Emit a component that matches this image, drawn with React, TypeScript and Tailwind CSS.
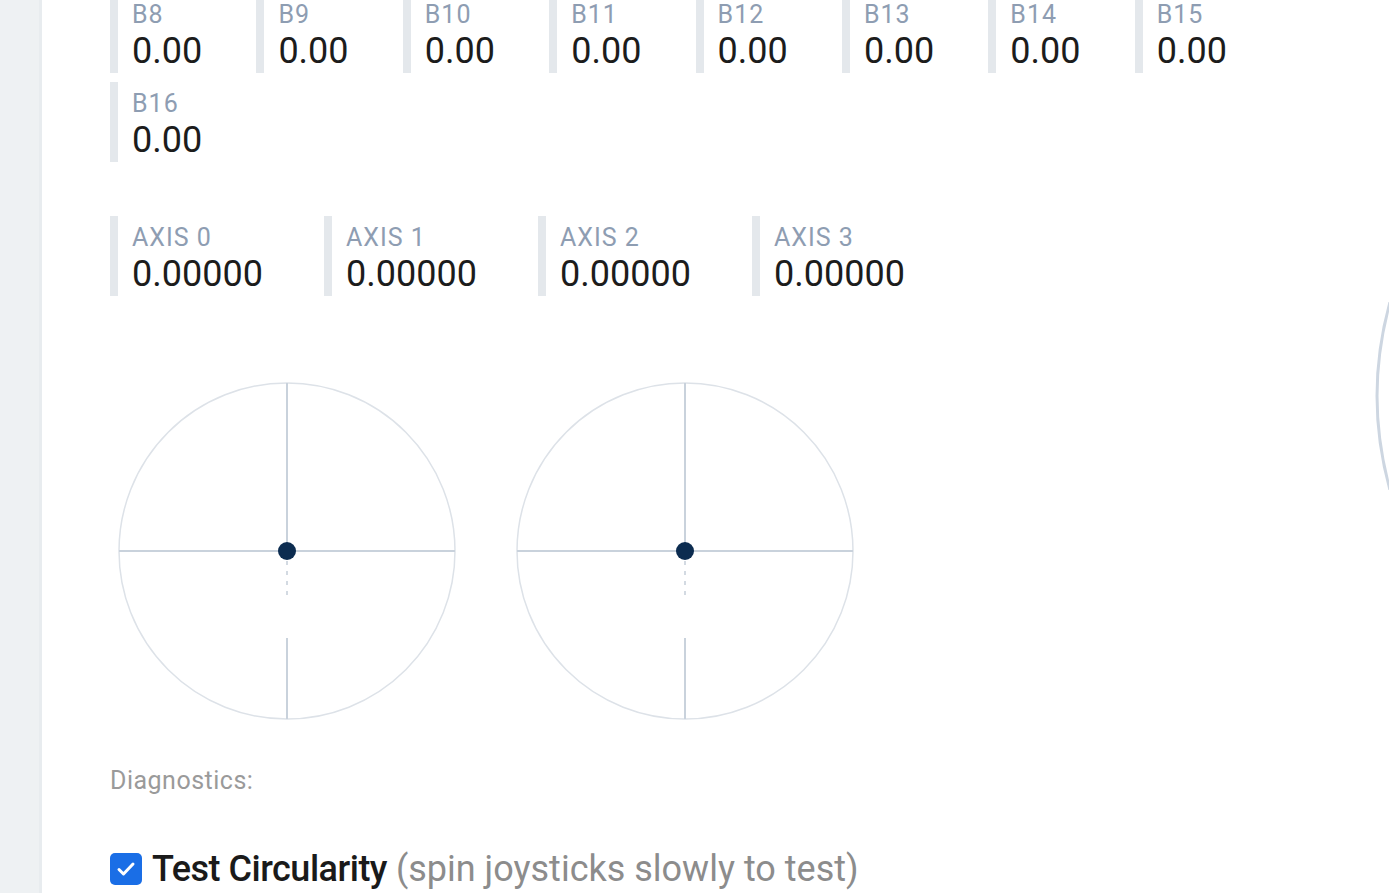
import React from 'react';

const buttons = ['B8', 'B9', 'B10', 'B11', 'B12', 'B13', 'B14', 'B15', 'B16'];
const axes = ['AXIS 0', 'AXIS 1', 'AXIS 2', 'AXIS 3'];

const Cell: React.FC<{ label: string; value: string }> = ({ label, value }) => (
  <div className="h-[80px] border-l-[8px] border-[#e4e8ec] pl-[14px] pt-[6px]">
    <div className="text-[25px] leading-[31px] tracking-[1px] text-[#8e9db2]">{label}</div>
    <div className="text-[36px] leading-[42px] text-[#1c1c1c]">{value}</div>
  </div>
);

const Stick: React.FC = () => (
  <svg width="340" height="340" viewBox="0 0 340 340" className="shrink-0">
    <circle cx="170" cy="170" r="168" fill="none" stroke="#dde2e8" strokeWidth="1.5" />
    <line x1="2" y1="170" x2="338" y2="170" stroke="#c9d2dc" strokeWidth="2" />
    <line x1="170" y1="2" x2="170" y2="170" stroke="#c9d2dc" strokeWidth="2" />
    <line x1="170" y1="180" x2="170" y2="218" stroke="#d3dae2" strokeWidth="2" strokeDasharray="4 6" />
    <line x1="170" y1="257" x2="170" y2="338" stroke="#c9d2dc" strokeWidth="2" />
    <circle cx="170" cy="170" r="9" fill="#0c2c50" />
  </svg>
);

export default function App() {
  return (
    <div className="flex h-[893px] w-[1389px] overflow-hidden bg-white font-['Roboto',sans-serif]">
      <aside className="w-[42px] shrink-0 border-r-[3px] border-[#e8ecef] bg-[#eef1f3]" />
      <main className="flex-1 pl-[68px]">
        <div className="-mt-[7px] grid grid-cols-[repeat(8,146.4px)] gap-y-[9px]">
          {buttons.map((b) => (
            <Cell key={b} label={b} value="0.00" />
          ))}
        </div>
        <div className="mt-[54px] grid grid-cols-[repeat(4,214px)]">
          {axes.map((a) => (
            <Cell key={a} label={a} value="0.00000" />
          ))}
        </div>
        <div className="ml-[7px] mt-[85px] flex gap-[58px]">
          <Stick />
          <Stick />
        </div>
        <div className="mt-[46px] text-[25px] leading-[28px] tracking-[0.5px] text-[#9a9a9a]">Diagnostics:</div>
        <label className="mt-[54px] flex h-[40px] items-center gap-[10px] text-[36px] leading-[40px]">
          <span className="flex h-[32px] w-[32px] items-center justify-center rounded-[5px] bg-[#1a6ee6]">
            <svg width="24" height="24" viewBox="0 0 24 24" fill="none" stroke="white" strokeWidth="3" strokeLinecap="round" strokeLinejoin="round">
              <path d="M5 12.5l4.5 4.5L19 7" />
            </svg>
          </span>
          <span>
            <span className="font-medium tracking-[-0.5px] text-[#1a1a1a]">Test Circularity</span>{' '}
            <span className="text-[#8c8c8c]">(spin joysticks slowly to test)</span>
          </span>
        </label>
      </main>
      <div className="w-[16px] shrink-0 overflow-hidden pt-[302px]">
        <svg width="16" height="188" viewBox="0 0 16 188">
          <path d="M17 0 A353 353 0 0 0 17 188" fill="none" stroke="#cdd6e1" strokeWidth="3" />
        </svg>
      </div>
    </div>
  );
}
